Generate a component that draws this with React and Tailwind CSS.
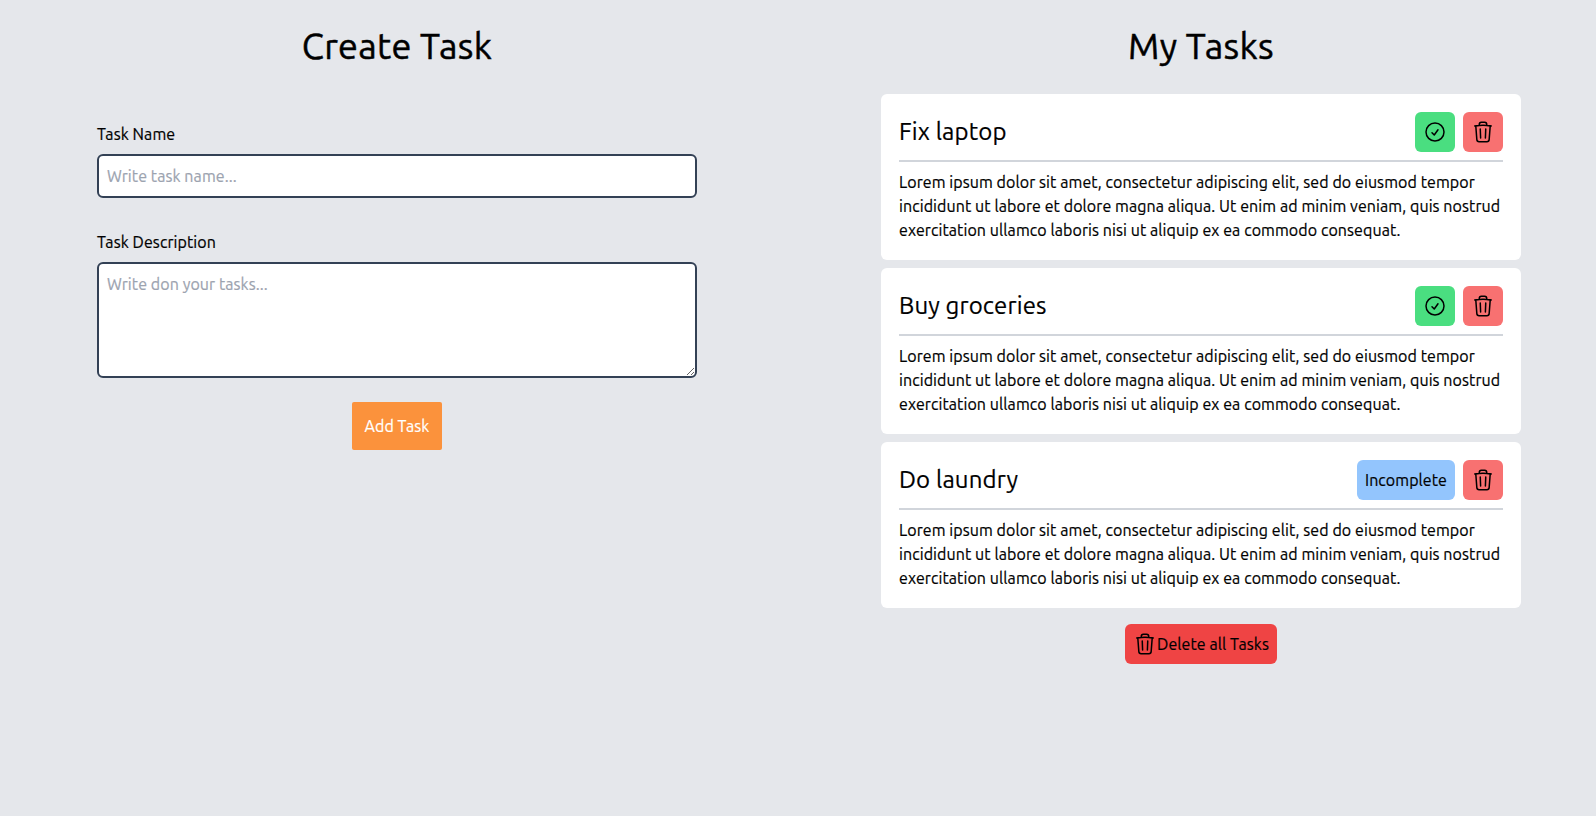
const description =
  'Lorem ipsum dolor sit amet, consectetur adipiscing elit, sed do eiusmod tempor incididunt ut labore et dolore magna aliqua. Ut enim ad minim veniam, quis nostrud exercitation ullamco laboris nisi ut aliquip ex ea commodo consequat.';

const tasks = [
  { id: 1, name: 'Fix laptop', description, done: false },
  { id: 2, name: 'Buy groceries', description, done: false },
  { id: 3, name: 'Do laundry', description, done: true },
];

function Icon({ d }) {
  return (
    <svg className="size-6 shrink-0" viewBox="0 0 24 24" fill="none" stroke="currentColor" strokeWidth="1.5" strokeLinecap="round" strokeLinejoin="round">
      <path d={d} />
    </svg>
  );
}

const trash =
  'M14.74 9l-.346 9m-4.788 0L9.26 9m9.968-3.21c.342.052.682.107 1.022.166m-1.022-.165L18.16 19.673a2.25 2.25 0 01-2.244 2.077H8.084a2.25 2.25 0 01-2.244-2.077L4.772 5.79m14.456 0a48.108 48.108 0 00-3.478-.397m-12 .562c.34-.059.68-.114 1.022-.165m0 0a48.11 48.11 0 013.478-.397m7.5 0v-.916c0-1.18-.91-2.164-2.09-2.201a51.964 51.964 0 00-3.32 0c-1.18.037-2.09 1.022-2.09 2.201v.916m7.5 0a48.667 48.667 0 00-7.5 0';
const check = 'M9 12.75L11.25 15 15 9.75M21 12a9 9 0 11-18 0 9 9 0 0118 0z';

function TaskCard({ task }) {
  return (
    <article className="rounded-md bg-white p-[18px]">
      <header className="flex items-center justify-between border-b-2 border-[#d1d5db] pb-2">
        <h2 className="text-2xl tracking-[0.14px]">{task.name}</h2>
        <div className="flex gap-2">
          {task.done ? (
            <button className="h-10 w-[98px] rounded-md bg-[#93c5fd] whitespace-nowrap">Incomplete</button>
          ) : (
            <button aria-label="Complete" className="rounded-md bg-[#4ade80] p-2"><Icon d={check} /></button>
          )}
          <button aria-label="Delete" className="rounded-md bg-[#f87171] p-2"><Icon d={trash} /></button>
        </div>
      </header>
      <p className="pt-2">{task.description}</p>
    </article>
  );
}

export default function App() {
  return (
    <main className="flex h-screen gap-3 overflow-hidden bg-[#e5e7eb] font-[Ubuntu,'Noto_Sans',sans-serif] tracking-[0.08px] text-black [-webkit-text-stroke:0.2px]">
      <section className="flex w-[794px] flex-col items-center pt-[26px]">
        <h1 className="text-4xl tracking-[0.3px] [-webkit-text-stroke:0.5px]">Create Task</h1>
        <form className="flex w-[600px] flex-col pt-14" onSubmit={(e) => e.preventDefault()}>
          <label htmlFor="name" className="mb-2 self-start">Task Name</label>
          <input id="name" placeholder="Write task name..." className="mb-8 h-11 rounded-md border-2 border-[#334155] bg-white p-2 placeholder:text-[#9ca3af]" />
          <label htmlFor="description" className="mb-2 self-start">Task Description</label>
          <textarea id="description" placeholder="Write don your tasks..." className="mb-6 h-[116px] rounded-md border-2 border-[#334155] bg-white p-2 placeholder:text-[#9ca3af]" />
          <button className="h-12 w-[90px] self-center rounded-xs bg-[#fb923c] whitespace-nowrap text-white">Add Task</button>
        </form>
      </section>
      <section className="flex w-[790px] flex-col items-center pt-[26px]">
        <h1 className="text-4xl tracking-[0.3px] [-webkit-text-stroke:0.5px]">My Tasks</h1>
        <div className="flex w-[640px] flex-col gap-2 pt-7">
          {tasks.map((t) => <TaskCard key={t.id} task={t} />)}
        </div>
        <button className="mt-4 flex h-10 w-[152px] items-center rounded-md bg-[#ef4444] px-2 whitespace-nowrap">
          <Icon d={trash} />Delete all Tasks
        </button>
      </section>
    </main>
  );
}
